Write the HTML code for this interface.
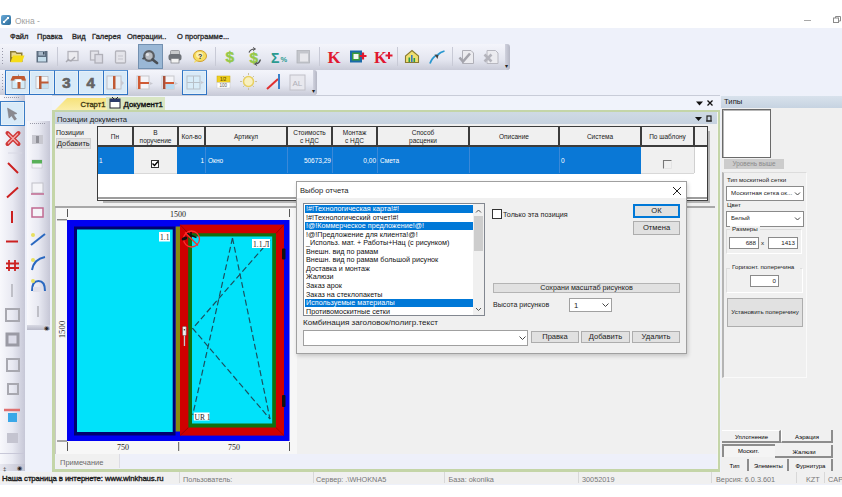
<!DOCTYPE html>
<html><head><meta charset="utf-8">
<style>
*{margin:0;padding:0;box-sizing:border-box}
html,body{width:842px;height:497px;overflow:hidden;background:#fff;font-family:"Liberation Sans",sans-serif;color:#000}
.a{position:absolute}
.t{position:absolute;white-space:nowrap;line-height:1}
svg{position:absolute;overflow:visible}
</style></head><body>
<!-- title -->
<div class="a" style="left:1px;top:15px;width:10px;height:10px;border-radius:2px;background:linear-gradient(135deg,#6aaad8,#2a6a98)"></div>
<svg style="left:0;top:0" width="20" height="30"><path d="M3.5 22.5l5-5" stroke="#fff" stroke-width="1.5"/><rect x="3" y="21" width="2" height="2" fill="#fff"/><rect x="7" y="17" width="2" height="2" fill="#fff"/></svg>
<div class="a" style="left:2px;top:31px;width:1px;height:9px;background:repeating-linear-gradient(#8a8a9a 0 1px,transparent 1px 2px)"></div>
<div class="t" style="left:15px;top:16.5px;font-size:8.5px;color:#a0a0a0">Окна -</div>
<div class="a" style="left:804px;top:19.5px;width:7px;height:1px;background:#a8a8a8"></div>
<svg style="left:0;top:0" width="842" height="30"><rect x="833.5" y="18" width="5" height="4.5" fill="none" stroke="#8a8a8a" stroke-width="1"/><path d="M835.5 18v-1.5h5v4.5h-2" fill="none" stroke="#8a8a8a" stroke-width="1"/></svg>

<!-- app background -->
<div class="a" id="app" style="left:0;top:28px;width:842px;height:457px;background:#eef1fa"></div>

<!-- menu -->
<div class="t" style="left:10px;top:33px;font-size:7.5px;color:#2a2a2a;-webkit-text-stroke:.3px #2a2a2a">Файл</div>
<div class="t" style="left:37px;top:33px;font-size:7.5px;color:#2a2a2a;-webkit-text-stroke:.3px #2a2a2a">Правка</div>
<div class="t" style="left:72px;top:33px;font-size:7.5px;color:#2a2a2a;-webkit-text-stroke:.3px #2a2a2a">Вид</div>
<div class="t" style="left:92px;top:33px;font-size:7.5px;color:#2a2a2a;-webkit-text-stroke:.3px #2a2a2a">Галерея</div>
<div class="t" style="left:127px;top:33px;font-size:7.5px;color:#2a2a2a;-webkit-text-stroke:.3px #2a2a2a">Операции..</div>
<div class="t" style="left:177px;top:33px;font-size:7.5px;color:#2a2a2a;-webkit-text-stroke:.3px #2a2a2a">О программе...</div>

<!-- toolbar 1 -->
<div class="a" style="left:0;top:44px;width:510px;height:26px;border-radius:0 3px 3px 0;background:linear-gradient(#f4f5fb,#e4e6f0 60%,#c9cbd8)"></div>
<!-- toolbar 2 -->
<div class="a" style="left:0;top:70px;width:317px;height:25px;border-radius:0 3px 3px 0;background:linear-gradient(#f4f5fb,#e4e6f0 60%,#c9cbd8)"></div>


<!-- toolbar 1 contents -->
<div class="a" style="left:2px;top:48px;width:1px;height:18px;background:repeating-linear-gradient(#9a9aaa 0 1px,transparent 1px 3px)"></div>
<div class="a" style="left:505px;top:44px;width:5px;height:26px;border-radius:0 3px 3px 0;background:linear-gradient(90deg,#d0d2de,#b4b6c4)"></div>
<div class="t" style="left:505px;top:63px;font-size:6px;color:#222">▾</div>
<div class="a" style="left:57px;top:47px;width:1px;height:19px;background:#c8cad6"></div>
<div class="a" style="left:215px;top:47px;width:1px;height:19px;background:#c8cad6"></div>
<div class="a" style="left:319px;top:47px;width:1px;height:19px;background:#c8cad6"></div>
<div class="a" style="left:397px;top:47px;width:1px;height:19px;background:#c8cad6"></div>
<div class="a" style="left:452px;top:47px;width:1px;height:19px;background:#c8cad6"></div>
<div class="a" style="left:138px;top:44px;width:25px;height:25px;background:#9ab7d5;border:1px solid #7390b0"></div>
<svg style="left:0;top:0" width="842" height="100">
 <!-- folder -->
 <path d="M10 51h5.5l1.5 1.5h5.5v9.5h-12.5z" fill="#8c7a34"/>
 <path d="M11.5 52.5h4l1 1.5h4.5v3h-9.5z" fill="#e8d890"/>
 <path d="M13 55.5h11.5l-2.5 6.8h-11.5z" fill="#f6dc18"/>
 <!-- save -->
 <rect x="36.5" y="51" width="11" height="11.5" fill="#5e6e80"/>
 <rect x="38.5" y="51.5" width="6.5" height="4" fill="#a8b8c8"/>
 <rect x="43" y="52" width="1.5" height="2.5" fill="#3a4a5a"/>
 <rect x="38" y="57" width="8" height="4.5" fill="#c4dcea"/>
 <!-- disabled icons -->
 <rect x="68" y="51.5" width="10" height="9" fill="#ececf0" stroke="#b4b4bc" stroke-width="1.3"/>
 <path d="M66 62l3-3M68 60l3 1 4-4" fill="none" stroke="#a8a8b0" stroke-width="1.4"/>
 <rect x="90.5" y="51" width="8" height="9" fill="#e4e4ea" stroke="#b4b4bc" stroke-width="1.3"/>
 <rect x="95" y="54.5" width="7.5" height="8.5" fill="#dcdce4" stroke="#b0b0b8" stroke-width="1.3"/>
 <rect x="115.5" y="51" width="10" height="12" rx="1" fill="#e4e4ea" stroke="#b4b4bc" stroke-width="1.3"/>
 <path d="M118 56h5M118 59h5" stroke="#c4c4cc" stroke-width="1"/>
 <!-- magnifier -->
 <circle cx="149" cy="56" r="4.8" fill="#b8bcc2" stroke="#5a5e64" stroke-width="2.2"/>
 <circle cx="147.5" cy="54.5" r="1.6" fill="#e0e2e6"/>
 <path d="M145 57.5l-2.5 1.5" stroke="#4a4e54" stroke-width="2"/>
 <path d="M152.5 59.5l4.5 3.5" stroke="#4a4e54" stroke-width="2.8" stroke-linecap="round"/>
 <!-- printer -->
 <rect x="170.5" y="50.5" width="9" height="5" rx="1" fill="#c8cacc" stroke="#8a8c90" stroke-width=".8"/>
 <rect x="168.5" y="54" width="13" height="6.5" rx="2.5" fill="#6e7278"/>
 <rect x="171" y="58.5" width="8" height="4.5" fill="#f2f2f2" stroke="#7a7c80" stroke-width=".7"/>
 <!-- help -->
 <ellipse cx="200" cy="56" rx="6.5" ry="5.5" fill="#f6dc60" stroke="#d0a030"/>
 <ellipse cx="199.5" cy="55" rx="3.5" ry="3" fill="#fcf0b0"/>
 <path d="M195 60l-1 3 4-2" fill="#f2dc6a"/>
 <text x="198" y="59" font-size="7" font-weight="bold" fill="#333" font-family="Liberation Sans">?</text>
 <!-- $ -->
 <text x="225.5" y="62" style="font:bold 15.5px 'Liberation Sans'" fill="#94c848" stroke="#94c848" stroke-width=".4">$</text>
 <text x="249.5" y="62.5" style="font:bold 15.5px 'Liberation Sans'" fill="#94c848" stroke="#94c848" stroke-width=".4">$</text>
 <path d="M249 52.5q1.5-3.5 5.5-3.5M260.5 59.5q-1 3.5-4.5 4.5" fill="none" stroke="#505050" stroke-width="1.2"/>
 <path d="M253 47.5l2.5 1.5-2.5 1.5M257 62.5l-2.5 1.5 2.5 1.5" fill="none" stroke="#505050" stroke-width="1"/>
 <!-- sigma -->
 <text x="271" y="62.5" style="font:bold 14px 'Liberation Sans'" fill="#2a9a90">Σ</text>
 <text x="280.5" y="62" style="font:bold 7.5px 'Liberation Sans'" fill="#2a9a90">%</text>
 <!-- box -->
 <rect x="297" y="50.5" width="12.5" height="12.5" fill="#c4c6cc" stroke="#b0b2b8" stroke-width=".8"/>
 <rect x="300" y="53.5" width="8" height="8" fill="#e8e8ec"/>
 <!-- K -->
 <text x="327.5" y="63" style="font:bold 17px 'Liberation Serif'" fill="#e01830">K</text>
 <rect x="350" y="50.5" width="12" height="12" fill="#1a6aa8"/>
 <rect x="352" y="52.5" width="8" height="8" fill="#3a9a3a"/>
 <rect x="353.5" y="54" width="5" height="5" fill="#f4f8f0"/>
 <path d="M363 52.5v7M359.5 56h7" stroke="#e01830" stroke-width="2.2"/>
 <text x="374" y="63" style="font:bold 16.5px 'Liberation Serif'" fill="#e01830">K</text>
 <path d="M389 52v7M385.5 55.5h7" stroke="#e01830" stroke-width="2"/>
 <!-- house -->
 <path d="M405.5 62.5v-6.5l6.5-5.5 6.5 5.5v6.5z" fill="#f0e070" stroke="#8a7a30" stroke-width="1.1"/>
 <rect x="408.5" y="57.5" width="1.6" height="4.5" fill="#2a9a4a"/><rect x="411" y="55" width="1.6" height="7" fill="#3a7ac0"/><rect x="413.5" y="58" width="1.6" height="4" fill="#2a9a4a"/>
 <!-- arrows -->
 <path d="M430 63.5q2-6 7-8.5" stroke="#2a98d0" stroke-width="1.8" fill="none"/>
 <path d="M437.5 55q3-3 7-4" stroke="#2a98d0" stroke-width="1.8" fill="none"/>
 <path d="M434.5 54.5l4 0.5-1 4z" fill="#444"/>
 <!-- disabled check / x -->
 <path d="M462.5 50.5h8.5l2.5 2.5v10.5h-11z" fill="#ececf0" stroke="#b0b0b8" stroke-width="1"/>
 <path d="M459.5 57.5l3.5 4 7-8" stroke="#a4a4ac" stroke-width="2.6" fill="none"/>
 <path d="M487 50.5h8.5l2.5 2.5v10.5h-11z" fill="#ececf0" stroke="#b8b8c0" stroke-width="1"/>
 <path d="M484.5 54.5l7 7M491.5 54.5l-7 7" stroke="#b4b4bc" stroke-width="2.6"/>
</svg>

<!-- toolbar 2 contents -->
<div class="a" style="left:2px;top:74px;width:1px;height:18px;background:repeating-linear-gradient(#9a9aaa 0 1px,transparent 1px 3px)"></div>
<div class="a" style="left:313px;top:70px;width:4px;height:25px;border-radius:0 3px 3px 0;background:linear-gradient(90deg,#d0d2de,#b4b6c4)"></div>
<div class="t" style="left:312px;top:88px;font-size:6px;color:#222">▾</div>
<div class="a" style="left:5px;top:70px;width:25px;height:25px;background:#d8eaf8;border:1.5px solid #2f74c4;border-top:1px solid #5a94d4;box-shadow:inset 0 0 0 1px #e6f0f8"></div>
<div class="a" style="left:29px;top:70px;width:26px;height:25px;background:#d8eaf8;border:1.5px solid #2f74c4;border-top:1px solid #5a94d4;box-shadow:inset 0 0 0 1px #e6f0f8"></div>
<div class="a" style="left:54px;top:70px;width:25px;height:25px;background:#d8eaf8;border:1.5px solid #2f74c4;border-top:1px solid #5a94d4;box-shadow:inset 0 0 0 1px #e6f0f8"></div>
<div class="a" style="left:78px;top:70px;width:26px;height:25px;background:#d8eaf8;border:1.5px solid #2f74c4;border-top:1px solid #5a94d4;box-shadow:inset 0 0 0 1px #e6f0f8"></div>
<div class="a" style="left:103px;top:70px;width:25px;height:25px;background:#d8eaf8;border:1.5px solid #2f74c4;border-top:1px solid #5a94d4;box-shadow:inset 0 0 0 1px #e6f0f8"></div>
<div class="a" style="left:182px;top:70px;width:25px;height:25px;background:#d8eaf8;border:1.5px solid #2f74c4;border-top:1px solid #5a94d4;box-shadow:inset 0 0 0 1px #e6f0f8"></div>
<svg style="left:0;top:0" width="842" height="100">
 <!-- house red -->
 <rect x="12" y="80" width="13" height="8.5" fill="#d4ecf8" stroke="#8a8a8a" stroke-width=".6"/>
 <rect x="15.5" y="79.5" width="6" height="3" fill="#fff"/>
 <path d="M10.5 80.5l2-4.5h12l1.5 4.5h-3.5l-1.5-1.5h-6l-1.5 1.5z" fill="#c05a30"/>
 <rect x="17.5" y="82" width="3" height="6.5" fill="#c05a30"/>
 <path d="M18.5 76v-1.5" stroke="#888" stroke-width=".8"/>
 <!-- frame icon -->
 <rect x="36" y="76.5" width="12" height="12" fill="#f4f6f8" stroke="#b8b8bc" stroke-width=".8"/>
 <rect x="41" y="83" width="7" height="5.5" fill="#c4e0f0"/>
 <rect x="39" y="76" width="2.5" height="13" fill="#b85a34"/>
 <rect x="41" y="81.5" width="7.5" height="2" fill="#c05a34"/>
 <text x="62.2" y="88" style="font:bold 15px 'Liberation Sans'" fill="#646464" stroke="#646464" stroke-width="0.7">3</text>
 <text x="86.5" y="88" style="font:bold 15px 'Liberation Sans'" fill="#646464" stroke="#646464" stroke-width="0.7">4</text>
 <!-- door -->
 <rect x="107" y="76" width="14" height="13" fill="#e8f0f6" stroke="#c0c0c8"/>
 <rect x="113" y="76" width="2.5" height="13" fill="#c05a34"/>
 <path d="M121 80l3 3-3 3" fill="#c8c8d0"/>
 <!-- frame arrows -->
 <rect x="137" y="76" width="12" height="13" fill="#f4f4f8" stroke="#c8c8cc"/>
 <rect x="138" y="76" width="2.5" height="13" fill="#d05a34"/>
 <rect x="140" y="82" width="9" height="2" fill="#d05a34"/>
 <path d="M150 82l3 1.5-3 1.5" fill="#c8c8d0"/>
 <rect x="162" y="76" width="12" height="13" fill="#f4f4f8" stroke="#c8c8cc"/>
 <rect x="163" y="76" width="2.5" height="13" fill="#a8503a"/>
 <rect x="165" y="82" width="9" height="2" fill="#d05a34"/>
 <rect x="166" y="84" width="8" height="5" fill="#b8daf0"/>
 <path d="M175 82l3 1.5-3 1.5" fill="#c8c8d0"/>
 <!-- grid -->
 <rect x="187" y="76" width="13" height="13" fill="#d8ecf8" stroke="#b8c0c8"/>
 <path d="M193.5 76v13M187 82.5h13" stroke="#b8c0c8"/>
 <path d="M201 81l3 1.5-3 1.5" fill="#c8c8d0"/>
 <!-- badge -->
 <rect x="217" y="76" width="13" height="6.5" fill="#f0d020" stroke="#c8a810" stroke-width=".5"/>
 <rect x="217" y="82.5" width="13" height="5.5" fill="#fff" stroke="#c8c8c8" stroke-width=".5"/>
 <text x="220" y="81" style="font:bold 4.5px 'Liberation Sans'" fill="#705800">1/2</text>
 <text x="219.5" y="87" style="font:4.5px 'Liberation Sans'" fill="#555">100</text>
 <!-- sun -->
 <circle cx="248.5" cy="81.5" r="5" fill="#f8f0c0" stroke="#e8d060" stroke-width="1.5"/>
 <path d="M248.5 73v2M248.5 88v2M240 81.5h2M255 81.5h2M243 76l1.5 1.5M254 76l-1.5 1.5M243 87l1.5-1.5M254 87l-1.5-1.5" stroke="#c8c0a0" stroke-width="1"/>
 <!-- red/blue -->
 <path d="M267 89l11-10" stroke="#e03030" stroke-width="2"/>
 <path d="M279 74v15" stroke="#3a80c8" stroke-width="2"/>
 <!-- AL -->
 <rect x="290" y="75" width="15" height="15" fill="#e8e8ee" stroke="#c0c0c8"/>
 <text x="292.5" y="86" font-size="8" fill="#b0b0b8" font-family="Liberation Sans">AL</text>
</svg>

<!-- left vertical toolbars -->
<div class="a" style="left:0;top:95px;width:25px;height:376px;background:linear-gradient(90deg,#f8f8fc,#e8e9f2 50%,#c6c7d6)"></div>
<div class="a" style="left:4px;top:97px;width:16px;height:1px;background:repeating-linear-gradient(90deg,#9a9aa8 0 1px,transparent 1px 2px)"></div>
<div class="a" style="left:0;top:101px;width:25px;height:25px;background:#d8eaf8;border:1.5px solid #3a7cc4;box-shadow:inset 0 0 0 1px #e6f0f8"></div>
<div class="a" style="left:27px;top:121px;width:23px;height:209px;background:linear-gradient(90deg,#f8f8fc,#e8e9f2 50%,#c6c7d6)"></div>
<div class="a" style="left:30px;top:123px;width:16px;height:1px;background:repeating-linear-gradient(90deg,#9a9aa8 0 1px,transparent 1px 2px)"></div>
<div class="a" style="left:27px;top:325px;width:23px;height:5px;background:linear-gradient(#d8d9e4,#b8b9c8)"></div>
<div class="a" style="left:0;top:453px;width:25px;height:1px;background:#c8c8d8"></div>
<div class="a" style="left:0;top:464px;width:25px;height:7px;background:linear-gradient(90deg,#e8e8f0,#c0c1d0)"></div>
<svg style="left:0;top:0" width="60" height="497">
 <path d="M7.5 108l9.5 5.5-3.5 1 3 4.5-2 1.2-3-4.5-2.5 2.5z" fill="#8a8a90" stroke="#7a7a80" stroke-width=".5"/>
 <path d="M7.5 133l11 11M18.5 133l-11 11" stroke="#d03838" stroke-width="4" stroke-linecap="round"/>
 <path d="M8 133.5l10 10M18 133.5l-10 10" stroke="#f4b0b0" stroke-width="1.1"/>
 <path d="M8 153h14" stroke="#d8d8e4" stroke-width="1"/>
 <path d="M8 163l10 10" stroke="#cc2020" stroke-width="2"/>
 <path d="M7 197.5l11-10" stroke="#cc2020" stroke-width="2"/>
 <path d="M12 211v12" stroke="#cc2020" stroke-width="2"/>
 <path d="M6 241.5h12" stroke="#cc2020" stroke-width="2"/>
 <path d="M9 260v11M15 260v11M6 263.5h13M6 268h13" stroke="#cc2020" stroke-width="1.8"/>
 <path d="M12 284v13" stroke="#b0b0b8" stroke-width="1.5"/>
 <rect x="6" y="309" width="13" height="12" fill="none" stroke="#a8a8b0" stroke-width="2"/>
 <rect x="7" y="334" width="11" height="11" fill="#dcdce8" stroke="#9a9aa4" stroke-width="3"/>
 <rect x="7" y="359" width="12" height="12" fill="none" stroke="#a8a8b0" stroke-width="2"/>
 <rect x="8" y="384" width="10" height="10" fill="none" stroke="#a8a8b0" stroke-width="2"/>
 <path d="M4 410h16" stroke="#e07070" stroke-width="2.5"/>
 <rect x="8" y="413" width="9" height="9" fill="#3aa8e8"/>
 <rect x="7" y="433" width="11" height="10" fill="#c4c4d0"/>
 <text x="3" y="470.5" font-size="6" fill="#333" font-family="Liberation Sans">‡</text>
 <text x="17" y="470" font-size="6" fill="#222" font-family="Liberation Sans">◉</text>
 <!-- toolbar 2 -->
 <rect x="32" y="135" width="11" height="9" fill="#c8c8d0"/><rect x="36" y="136" width="3" height="7" fill="#909098"/>
 <rect x="32" y="160" width="10" height="8" fill="#f4f4f8" stroke="#b8b8c0" stroke-width=".5"/><rect x="32" y="160" width="10" height="3.5" fill="#58b058"/>
 <rect x="32" y="183" width="11" height="10" fill="#f4f4f8" stroke="#c0c0c8" stroke-width="1"/><path d="M31 194h13" stroke="#c06890" stroke-width="1.5"/>
 <rect x="32" y="208" width="11" height="9" fill="#f4f4f8" stroke="#c06890" stroke-width="1.5"/>
 <path d="M31 245l14-11" stroke="#2a68c0" stroke-width="2"/><circle cx="33" cy="235" r="2" fill="#e8e060"/>
 <path d="M32 270q2-11 13-13" stroke="#2a68c0" stroke-width="2" fill="none"/><circle cx="33" cy="260" r="2" fill="#e8e060"/>
 <path d="M32 291q0-10 6.5-10t6.5 10" stroke="#2a68c0" stroke-width="2" fill="none"/><circle cx="33" cy="281" r="2" fill="#e8e060"/>
 <rect x="33" y="287" width="10" height="5" fill="#e0e0ea"/>
 <path d="M38 306v11" stroke="#b0b0b8" stroke-width="1.5"/>
 <text x="44" y="330" font-size="6" fill="#222" font-family="Liberation Sans">◉</text>
</svg>

<!-- document panel -->
<div class="a" style="left:52px;top:95px;width:668px;height:15px;background:#f0f3fb;border-top:1px solid #c8ccd8"></div>
<svg style="left:0;top:0" width="842" height="120">
 <defs><linearGradient id="ytab" x1="0" y1="0" x2="0" y2="1"><stop offset="0" stop-color="#f6e27a"/><stop offset="1" stop-color="#fbeea8"/></linearGradient></defs>
 <path d="M55 110L67 98H106L107 110z" fill="url(#ytab)"/>
 <path d="M106 97H165V110H107z" fill="#d9e6c4"/>
 <rect x="110" y="99" width="10" height="9" fill="#fff" stroke="#223" stroke-width="1"/>
 <rect x="110" y="99" width="10" height="3" fill="#2a3a6a"/>
 <path d="M112 97l2 2M118 97l-2 2" stroke="#223" stroke-width="1"/>
 <path d="M696 101.5h7l-3.5 4z" fill="#111"/>
 <path d="M707.5 100.5l5 5M712.5 100.5l-5 5" stroke="#111" stroke-width="1.3"/>
</svg>
<div class="t" style="left:80.5px;top:100.5px;font-size:7.6px;color:#3a3410;-webkit-text-stroke:.3px #3a3410">Старт1</div>
<div class="t" style="left:123.5px;top:100.5px;font-size:7.9px;color:#111;-webkit-text-stroke:.35px #111">Документ1</div>
<div class="a" style="left:52px;top:110px;width:668px;height:362px;background:#c4d5a8"></div>
<div class="a" style="left:54.5px;top:112px;width:663px;height:357px;background:#f4f5f0"></div>
<div class="a" style="left:55px;top:112px;width:662px;height:357px;background:#f0f0f0"></div>
<div class="a" style="left:55px;top:112px;width:662px;height:12px;background:linear-gradient(#cfdae4,#c6d2e0)"></div>
<div class="t" style="left:57px;top:116px;font-size:7.7px;color:#222">Позиции документа</div>
<svg style="left:0;top:0" width="842" height="130">
 <path d="M695 117h7l-3.5 4z" fill="#111"/>
 <rect x="707" y="116" width="4" height="5" fill="none" stroke="#222" stroke-width="1.2"/>
 <path d="M706 121h6" stroke="#222"/>
</svg>
<div class="t" style="left:56px;top:128.5px;font-size:7px;color:#222">Позиции</div>
<div class="a" style="left:56px;top:138px;width:35px;height:11px;background:#e1e1e1;border:1px solid #d0d0d0"></div>
<div class="t" style="left:57px;top:140px;font-size:7.4px;color:#222">Добавить</div>

<!-- table -->
<div class="a" style="left:103px;top:201px;width:607px;height:2px;background:#b4b4b4"></div>
<div class="a" style="left:708px;top:131px;width:2px;height:72px;background:#b4b4b4"></div>
<div class="a" style="left:96.5px;top:125.5px;width:611.5px;height:75.5px;background:#fff;border:1.5px solid #3c3c3c;border-bottom:1.5px solid #444"></div>
<div class="a" style="left:98px;top:197px;width:608.5px;height:1.5px;background:#9c9c9c"></div>
<div class="a" style="left:55px;top:206px;width:660px;height:1.5px;background:#a8a8a8"></div>
<div class="a" style="left:98px;top:127px;width:609px;height:20px;background:#f0f0f0;border-bottom:2px solid #3c3c3c"></div>
<div class="a" style="left:98px;top:147px;width:543px;height:27px;background:#0a78d6"></div>
<div class="a" style="left:134px;top:147px;width:43px;height:27px;background:#f0f0f0;border-bottom:1px solid #d8d8d8"></div>
<div class="a" style="left:641px;top:147px;width:53px;height:27px;background:#f0f0f0;border-bottom:1px solid #d8d8d8"></div>
<div class="a" style="left:132px;top:127px;width:2px;height:18px;background:#3c3c3c"></div>
<div class="a" style="left:177px;top:127px;width:2px;height:18px;background:#3c3c3c"></div>
<div class="a" style="left:204px;top:127px;width:2px;height:18px;background:#3c3c3c"></div>
<div class="a" style="left:286px;top:127px;width:2px;height:18px;background:#3c3c3c"></div>
<div class="a" style="left:331px;top:127px;width:2px;height:18px;background:#3c3c3c"></div>
<div class="a" style="left:376px;top:127px;width:2px;height:18px;background:#3c3c3c"></div>
<div class="a" style="left:468px;top:127px;width:2px;height:18px;background:#3c3c3c"></div>
<div class="a" style="left:558px;top:127px;width:2px;height:18px;background:#3c3c3c"></div>
<div class="a" style="left:640px;top:127px;width:2px;height:18px;background:#3c3c3c"></div>
<div class="a" style="left:693px;top:127px;width:2px;height:18px;background:#3c3c3c"></div>
<div class="a" style="left:205px;top:147px;width:1px;height:26px;background:#3a88d8"></div>
<div class="a" style="left:287px;top:147px;width:1px;height:26px;background:#3a88d8"></div>
<div class="a" style="left:332px;top:147px;width:1px;height:26px;background:#3a88d8"></div>
<div class="a" style="left:377px;top:147px;width:1px;height:26px;background:#3a88d8"></div>
<div class="a" style="left:469px;top:147px;width:1px;height:26px;background:#3a88d8"></div>
<div class="a" style="left:559px;top:147px;width:1px;height:26px;background:#3a88d8"></div>
<div class="a" style="left:694px;top:147px;width:1px;height:26px;background:#d0d0d0"></div>
<div class="t" style="left:97px;top:134px;width:36px;text-align:center;font-size:6.5px;color:#222">Пн</div>
<div class="t" style="left:133px;top:128.5px;width:45px;text-align:center;font-size:6.5px;line-height:8.5px;color:#222">В<br>поручение</div>
<div class="t" style="left:178px;top:134px;width:27px;text-align:center;font-size:6.5px;color:#222">Кол-во</div>
<div class="t" style="left:205px;top:134px;width:82px;text-align:center;font-size:6.5px;color:#222">Артикул</div>
<div class="t" style="left:287px;top:128.5px;width:45px;text-align:center;font-size:6.5px;line-height:8.5px;color:#222">Стоимость<br>с НДС</div>
<div class="t" style="left:332px;top:128.5px;width:45px;text-align:center;font-size:6.5px;line-height:8.5px;color:#222">Монтаж<br>с НДС</div>
<div class="t" style="left:377px;top:128.5px;width:92px;text-align:center;font-size:6.5px;line-height:8.5px;color:#222">Способ<br>расценки</div>
<div class="t" style="left:469px;top:134px;width:90px;text-align:center;font-size:6.5px;color:#222">Описание</div>
<div class="t" style="left:559px;top:134px;width:82px;text-align:center;font-size:6.5px;color:#222">Система</div>
<div class="t" style="left:641px;top:134px;width:53px;text-align:center;font-size:6.5px;color:#222">По шаблону</div>
<div class="t" style="left:99px;top:157.5px;font-size:6.5px;color:#fff">1</div>
<div class="t" style="left:178px;top:157.5px;width:26px;text-align:right;font-size:6.5px;color:#fff">1</div>
<div class="t" style="left:208px;top:157.5px;font-size:6.5px;color:#fff">Окно</div>
<div class="t" style="left:287px;top:157.5px;width:44px;text-align:right;font-size:6.5px;color:#fff">50673,29</div>
<div class="t" style="left:332px;top:157.5px;width:44px;text-align:right;font-size:6.5px;color:#fff">0,00</div>
<div class="t" style="left:380px;top:157.5px;font-size:6.5px;color:#fff">Смета</div>
<div class="t" style="left:561px;top:157.5px;font-size:6.5px;color:#fff">0</div>
<div class="a" style="left:151px;top:160px;width:8px;height:8px;background:#fff;border:1px solid #333"></div>
<svg style="left:0;top:0" width="842" height="200">
 <path d="M152.5 163.5l2 2 3.5-4" stroke="#000" stroke-width="1.4" fill="none"/>
 <path d="M663.5 168.5v-8h8" stroke="#777" stroke-width="1.1" fill="none"/>
 <path d="M664.5 168.5h7v-7" stroke="#e4e4e4" stroke-width="1" fill="none"/>
</svg>


<!-- drawing area -->
<div class="a" style="left:55px;top:207.5px;width:242px;height:246.5px;background:#f7f7f7;border-left:1px solid #c8c8c8"></div>
<div class="a" style="left:55px;top:454px;width:662px;height:15px;background:#eef0fa"></div>
<div class="a" style="left:56px;top:454px;width:64px;height:14px;background:#f0f0f0;border-right:1px solid #dcdce4"></div>
<div class="t" style="left:60px;top:458.5px;font-size:7.5px;color:#6a6a6a">Примечание</div>
<svg style="left:0;top:0" width="842" height="497">
 <!-- rulers -->
 <path d="M289.5 209v8M67.5 209v8M57 219.8h10M178.7 442v9M67.5 442v9M289.5 442v9M57 441h10" stroke="#555" stroke-width="1"/>
 <text x="178" y="217" font-size="8" fill="#222" font-family="Liberation Serif" text-anchor="middle">1500</text>
 <text x="123" y="450" font-size="8" fill="#222" font-family="Liberation Serif" text-anchor="middle">750</text>
 <text x="234" y="450" font-size="8" fill="#222" font-family="Liberation Serif" text-anchor="middle">750</text>
 <text transform="translate(64.8 329.5) rotate(-90)" font-size="8.8" fill="#222" font-family="Liberation Serif" text-anchor="middle">1500</text>
 <!-- outer frame -->
 <rect x="67" y="220" width="222.5" height="221" fill="#0000f2"/>
 <!-- left pane -->
 <rect x="74" y="226.5" width="101.5" height="209" fill="#00006e"/>
 <rect x="77" y="229.5" width="95.7" height="202.5" fill="#00e2fa"/>
 <rect x="175.7" y="226.5" width="4.3" height="205" fill="#8a8a10"/>
 <!-- sash -->
 <rect x="180" y="224.6" width="104" height="211" fill="#d00000"/>
 <path d="M180 224.6L188.4 233.5M284 224.6L275.9 233.5M180 435.6L188.4 427.5M284 435.6L275.9 427.5" stroke="#900000" stroke-width=".8"/>
 <rect x="188.4" y="233.5" width="87.5" height="94" fill="#107010"/>
 <rect x="188.4" y="233.5" width="87.5" height="194" fill="#107010"/>
 <rect x="192" y="236.5" width="80.2" height="187" fill="#00e2fa"/>
 <!-- dashed lines -->
 <g stroke="#1a5060" stroke-width="1.2" stroke-dasharray="6 3" fill="none">
  <path d="M232.5 238L192.7 415M232.5 238L270 419"/>
  <path d="M270 240L192.7 328.4L270 419"/>
 </g>
 <!-- handles -->
 <rect x="182" y="248.4" width="0" height="0" fill="#000"/>
 <rect x="282" y="248.4" width="3.5" height="11" rx="1" fill="#111"/>
 <rect x="282" y="395" width="3.5" height="12" rx="1" fill="#111"/>
 <rect x="182.6" y="326.5" width="3.6" height="9" rx=".8" fill="#f0f0f0" stroke="#666" stroke-width=".6"/>
 <circle cx="184.4" cy="329.8" r=".8" fill="#333"/>
 <rect x="183.8" y="335.5" width="1.3" height="10.5" fill="#c8c8c8"/>
 <!-- labels -->
 <rect x="159" y="232" width="11" height="9.5" fill="#fff"/>
 <text x="160" y="239.5" font-size="7.5" fill="#222" font-family="Liberation Serif">1.1</text>
 <rect x="252" y="239" width="18" height="9" fill="#fff"/>
 <text x="253" y="246.5" font-size="7.5" fill="#222" font-family="Liberation Serif">1.1.Л</text>
 <rect x="193.8" y="412.5" width="15.7" height="8" fill="#fff"/>
 <text x="194.5" y="419.5" font-size="7.5" fill="#222" font-family="Liberation Serif">UR 1</text>
 <!-- mosquito symbol -->
 <circle cx="191.5" cy="239" r="8" fill="none" stroke="#ff3030" stroke-width="1.3"/>
 <path d="M185 232.5l13 13" stroke="#ff2a2a" stroke-width="1.3"/>
 <ellipse cx="184.5" cy="238.5" rx="3" ry="1.6" transform="rotate(-20 184.5 238.5)" fill="#111"/>
 <path d="M187.5 233l4 3.5M190 235l6.5 2.5M191 232v5" stroke="#111" stroke-width="1.6"/>
</svg>


<!-- dialog -->
<div class="a" style="left:296px;top:181px;width:391px;height:173px;background:#f0f0f0;border:1px solid #a0a0a0;box-shadow:1px 2px 4px rgba(0,0,0,.18)"></div>
<div class="a" style="left:297px;top:182px;width:389px;height:16px;background:#fff"></div>
<div class="t" style="left:300px;top:187px;font-size:7.6px;color:#222">Выбор отчета</div>
<svg style="left:0;top:0" width="842" height="497">
 <path d="M673 187l8 8M681 187l-8 8" stroke="#222" stroke-width="1"/>
</svg>
<div class="a" style="left:303px;top:203px;width:182px;height:113px;background:#fff;border:1px solid #828790;overflow:hidden">
<div class="t" style="left:1px;top:1.00px;width:168px;height:8.4px;background:#0078d7;color:#fff;font-size:7.2px;line-height:8.4px;padding-left:1px">!#!Технологическая карта!#!</div>
<div class="t" style="left:1px;top:9.55px;width:168px;height:8.4px;color:#111;font-size:7.2px;line-height:8.4px;padding-left:1px">!#!Технологический отчет!#!</div>
<div class="t" style="left:1px;top:18.10px;width:168px;height:8.4px;background:#0078d7;color:#fff;font-size:7.2px;line-height:8.4px;padding-left:1px">!@!Коммерческое предложение!@!</div>
<div class="t" style="left:1px;top:26.65px;width:168px;height:8.4px;color:#111;font-size:7.2px;line-height:8.4px;padding-left:1px">!@!Предложение для клиента!@!</div>
<div class="t" style="left:1px;top:35.20px;width:168px;height:8.4px;color:#111;font-size:7.2px;line-height:8.4px;padding-left:1px">_Использ. мат. + Работы+Нац (с рисунком)</div>
<div class="t" style="left:1px;top:43.75px;width:168px;height:8.4px;color:#111;font-size:7.2px;line-height:8.4px;padding-left:1px">Внешн. вид по рамам</div>
<div class="t" style="left:1px;top:52.30px;width:168px;height:8.4px;color:#111;font-size:7.2px;line-height:8.4px;padding-left:1px">Внешн. вид по рамам большой рисунок</div>
<div class="t" style="left:1px;top:60.85px;width:168px;height:8.4px;color:#111;font-size:7.2px;line-height:8.4px;padding-left:1px">Доставка и монтаж</div>
<div class="t" style="left:1px;top:69.40px;width:168px;height:8.4px;color:#111;font-size:7.2px;line-height:8.4px;padding-left:1px">Жалюзи</div>
<div class="t" style="left:1px;top:77.95px;width:168px;height:8.4px;color:#111;font-size:7.2px;line-height:8.4px;padding-left:1px">Заказ арок</div>
<div class="t" style="left:1px;top:86.50px;width:168px;height:8.4px;color:#111;font-size:7.2px;line-height:8.4px;padding-left:1px">Заказ на стеклопакеты</div>
<div class="t" style="left:1px;top:95.05px;width:168px;height:8.4px;background:#0078d7;color:#fff;font-size:7.2px;line-height:8.4px;padding-left:1px">Используемые материалы</div>
<div class="t" style="left:1px;top:103.60px;width:168px;height:8.4px;color:#111;font-size:7.2px;line-height:8.4px;padding-left:1px">Противомоскитные сетки</div>
<div class="a" style="left:169px;top:0;width:12px;height:111px;background:#f0f0f0"></div>
<div class="a" style="left:170px;top:12px;width:9px;height:35px;background:#cdcdcd"></div>
<svg style="left:0;top:0" width="182" height="113">
 <path d="M172 8.5l2.5-2.5 2.5 2.5" stroke="#555" stroke-width="1" fill="none"/>
 <path d="M172 104l2.5 2.5 2.5-2.5" stroke="#555" stroke-width="1" fill="none"/>
</svg>
</div>
<div class="a" style="left:492px;top:209px;width:10px;height:10px;background:#fff;border:1px solid #333"></div>
<div class="t" style="left:503px;top:211px;font-size:7.2px;color:#222">Только эта позиция</div>
<div class="a" style="left:633px;top:204px;width:47px;height:14px;background:#e1e1e1;border:2px solid #0078d7"></div>
<div class="t" style="left:633px;top:207px;width:47px;text-align:center;font-size:7.6px;color:#222">ОК</div>
<div class="a" style="left:633px;top:221px;width:47px;height:14px;background:#e1e1e1;border:1px solid #adadad"></div>
<div class="t" style="left:633px;top:224px;width:47px;text-align:center;font-size:7.6px;color:#222">Отмена</div>
<div class="a" style="left:493px;top:283px;width:187px;height:10px;background:#e1e1e1;border:1px solid #b4b4b4"></div>
<div class="t" style="left:493px;top:284px;width:187px;text-align:center;font-size:7.2px;color:#222">Сохрани масштаб рисунков</div>
<div class="t" style="left:493px;top:301.5px;font-size:7.1px;color:#222">Высота рисунков</div>
<div class="a" style="left:569px;top:298px;width:43px;height:14px;background:#fff;border:1px solid #a0a0a0"></div>
<div class="t" style="left:574px;top:302px;font-size:7.6px;color:#222">1</div>
<div class="t" style="left:303px;top:319px;font-size:8.1px;color:#222">Комбинация заголовок/полигр.текст</div>
<div class="a" style="left:303px;top:330px;width:225px;height:16px;background:#fff;border:1px solid #a0a0a0"></div>
<svg style="left:0;top:0" width="842" height="497">
 <path d="M602.5 303.5l3 3 3-3" stroke="#444" stroke-width="1" fill="none"/>
 <path d="M519.5 336.5l3 3 3-3" stroke="#444" stroke-width="1" fill="none"/>
</svg>
<div class="a" style="left:531px;top:331px;width:48px;height:12px;background:#e1e1e1;border:1px solid #adadad"></div>
<div class="t" style="left:531px;top:333px;width:48px;text-align:center;font-size:7.6px;color:#222">Правка</div>
<div class="a" style="left:581px;top:331px;width:49px;height:12px;background:#e1e1e1;border:1px solid #adadad"></div>
<div class="t" style="left:581px;top:333px;width:49px;text-align:center;font-size:7.6px;color:#222">Добавить</div>
<div class="a" style="left:632px;top:331px;width:48px;height:12px;background:#e1e1e1;border:1px solid #adadad"></div>
<div class="t" style="left:632px;top:333px;width:48px;text-align:center;font-size:7.6px;color:#222">Удалить</div>

<!-- right panel -->
<div class="a" style="left:721px;top:96px;width:121px;height:376px;background:#f0f0f0"></div>
<div class="a" style="left:721px;top:95.5px;width:121px;height:12.5px;background:linear-gradient(#d8e2ec,#c6d3e1)"></div>
<div class="t" style="left:724px;top:98px;font-size:7.7px;color:#222">Типы</div>
<div class="a" style="left:722px;top:109px;width:49px;height:49px;background:#fff;border:1px solid #6a6a6a;box-shadow:inset 1px 1px 0 #b8b8b8"></div>
<div class="a" style="left:724px;top:159px;width:60px;height:10px;background:#cccccc"></div>
<div class="t" style="left:724px;top:161px;width:60px;text-align:center;font-size:6.4px;color:#8a8a8a">Уровень выше</div>
<div class="a" style="left:722px;top:172px;width:85px;height:206px;border:1px solid #dcdcdc;border-left:2px solid #b4b4b4;border-right-color:#fafafa;border-bottom-color:#fafafa"></div>
<div class="t" style="left:727px;top:177px;font-size:6.2px;color:#222">Тип москитной сетки</div>
<div class="a" style="left:726px;top:186px;width:78px;height:15px;background:#fff;border:1px solid #8a8a8a"></div>
<div class="t" style="left:731px;top:190px;font-size:6.2px;color:#222">Москитная сетка ок...</div>
<div class="t" style="left:727px;top:202px;font-size:6.2px;color:#222">Цвет</div>
<div class="a" style="left:726px;top:211px;width:78px;height:16px;background:#fff;border:1px solid #8a8a8a"></div>
<div class="t" style="left:731px;top:215px;font-size:6.2px;color:#222">Белый</div>
<svg style="left:0;top:0" width="842" height="497">
 <path d="M795 192.5l2.5 2.5 2.5-2.5" stroke="#444" stroke-width="1" fill="none"/>
 <path d="M795 217.5l2.5 2.5 2.5-2.5" stroke="#444" stroke-width="1" fill="none"/>
</svg>
<div class="a" style="left:726px;top:229px;width:76px;height:25px;border:1px solid #dcdcdc;border-right-color:#fff;border-bottom-color:#fff"></div>
<div class="a" style="left:730px;top:226px;width:30px;height:6px;background:#f0f0f0"></div>
<div class="t" style="left:732px;top:226px;font-size:6.2px;color:#222">Размеры</div>
<div class="a" style="left:729px;top:237px;width:30px;height:12px;background:#fff;border:1px solid #8a8a8a"></div>
<div class="t" style="left:729px;top:240px;width:27px;text-align:right;font-size:6.2px;color:#222">688</div>
<div class="t" style="left:761px;top:240px;font-size:6.2px;color:#222">x</div>
<div class="a" style="left:768px;top:237px;width:30px;height:12px;background:#fff;border:1px solid #8a8a8a"></div>
<div class="t" style="left:768px;top:240px;width:27px;text-align:right;font-size:6.2px;color:#222">1413</div>
<div class="a" style="left:726px;top:268px;width:77px;height:25px;border:1px solid #dcdcdc;border-right-color:#fff;border-bottom-color:#fff"></div>
<div class="a" style="left:730px;top:264px;width:70px;height:6px;background:#f0f0f0"></div>
<div class="t" style="left:732px;top:264px;font-size:6.2px;color:#222">Горизонт. поперечина</div>
<div class="a" style="left:750px;top:275px;width:29px;height:12px;background:#fff;border:1px solid #8a8a8a"></div>
<div class="t" style="left:750px;top:278px;width:26px;text-align:right;font-size:6.2px;color:#222">0</div>
<div class="a" style="left:727px;top:298px;width:76px;height:29px;background:#e1e1e1;border:1px solid #adadad"></div>
<div class="t" style="left:727px;top:309px;width:76px;text-align:center;font-size:6.2px;color:#222">Установить поперечину</div>
<!-- bottom tabs -->
<div class="a" style="left:722px;top:430px;width:59px;height:13px;background:#f0f0f0;border-top:1px solid #fff;border-right:2px solid #8c8c8c;border-bottom:2px solid #8c8c8c"></div>
<div class="t" style="left:722px;top:434px;width:59px;text-align:center;font-size:6px;color:#000">Уплотнение</div>
<div class="a" style="left:781px;top:430px;width:52px;height:13px;background:#f0f0f0;border-left:1px solid #fff;border-right:2px solid #8c8c8c;border-bottom:2px solid #8c8c8c"></div>
<div class="t" style="left:781px;top:434px;width:52px;text-align:center;font-size:6px;color:#000">Аэрация</div>
<div class="a" style="left:722px;top:444px;width:53px;height:13px;background:#f4f4f4;border-top:2px solid #8c8c8c;border-left:2px solid #8c8c8c"></div>
<div class="t" style="left:722px;top:448px;width:53px;text-align:center;font-size:6px;color:#000">Москит.</div>
<div class="a" style="left:775px;top:445px;width:58px;height:13px;background:#f0f0f0;border-right:2px solid #8c8c8c;border-bottom:2px solid #8c8c8c"></div>
<div class="t" style="left:775px;top:449px;width:58px;text-align:center;font-size:6px;color:#000">Жалюзи</div>
<div class="a" style="left:722px;top:459px;width:27px;height:12px;background:#f0f0f0;border-right:2px solid #8c8c8c"></div>
<div class="t" style="left:722px;top:463px;width:25px;text-align:center;font-size:6px;color:#000">Тип</div>
<div class="a" style="left:749px;top:459px;width:40px;height:12px;background:#f0f0f0;border-right:2px solid #8c8c8c"></div>
<div class="t" style="left:749px;top:463px;width:39px;text-align:center;font-size:6px;color:#000">Элементы</div>
<div class="a" style="left:789px;top:459px;width:44px;height:12px;background:#f0f0f0;border-right:2px solid #8c8c8c"></div>
<div class="t" style="left:789px;top:463px;width:43px;text-align:center;font-size:6px;color:#000">Фурнитура</div>

<!-- status bar -->
<div class="a" style="left:0;top:472px;width:842px;height:12px;background:#f0f0f0"></div>
<div class="t" style="left:2px;top:475px;font-size:7.8px;letter-spacing:-0.12px;color:#1a1a1a;-webkit-text-stroke:.35px #1a1a1a">Наша страница в интернете: www.winkhaus.ru</div>
<div class="t" style="left:183px;top:475.5px;font-size:7.3px;color:#777">Пользователь:</div>
<div class="t" style="left:316px;top:475.5px;font-size:7.3px;color:#777">Сервер: .\WHOKNA5</div>
<div class="t" style="left:448.5px;top:475.5px;font-size:7.3px;color:#777">База: okonika</div>
<div class="t" style="left:582px;top:475.5px;font-size:7.3px;color:#777">30052019</div>
<div class="t" style="left:716px;top:475.5px;font-size:7.3px;color:#777">Версия: 6.0.3.601</div>
<div class="t" style="left:806px;top:475.5px;font-size:7.3px;color:#777">KZT</div>
<div class="t" style="left:828px;top:475.5px;font-size:7.3px;color:#777">CAP</div>
<div class="a" style="left:796px;top:472px;width:1px;height:11px;background:#d8d8d8"></div>
<div class="a" style="left:179px;top:472px;width:1px;height:11px;background:#d8d8d8"></div>
<div class="a" style="left:313px;top:472px;width:1px;height:11px;background:#d8d8d8"></div>
<div class="a" style="left:444px;top:472px;width:1px;height:11px;background:#d8d8d8"></div>
<div class="a" style="left:578px;top:472px;width:1px;height:11px;background:#d8d8d8"></div>
<div class="a" style="left:711px;top:472px;width:1px;height:11px;background:#d8d8d8"></div>
<div class="a" style="left:824px;top:472px;width:1px;height:11px;background:#d8d8d8"></div>
</body></html>
